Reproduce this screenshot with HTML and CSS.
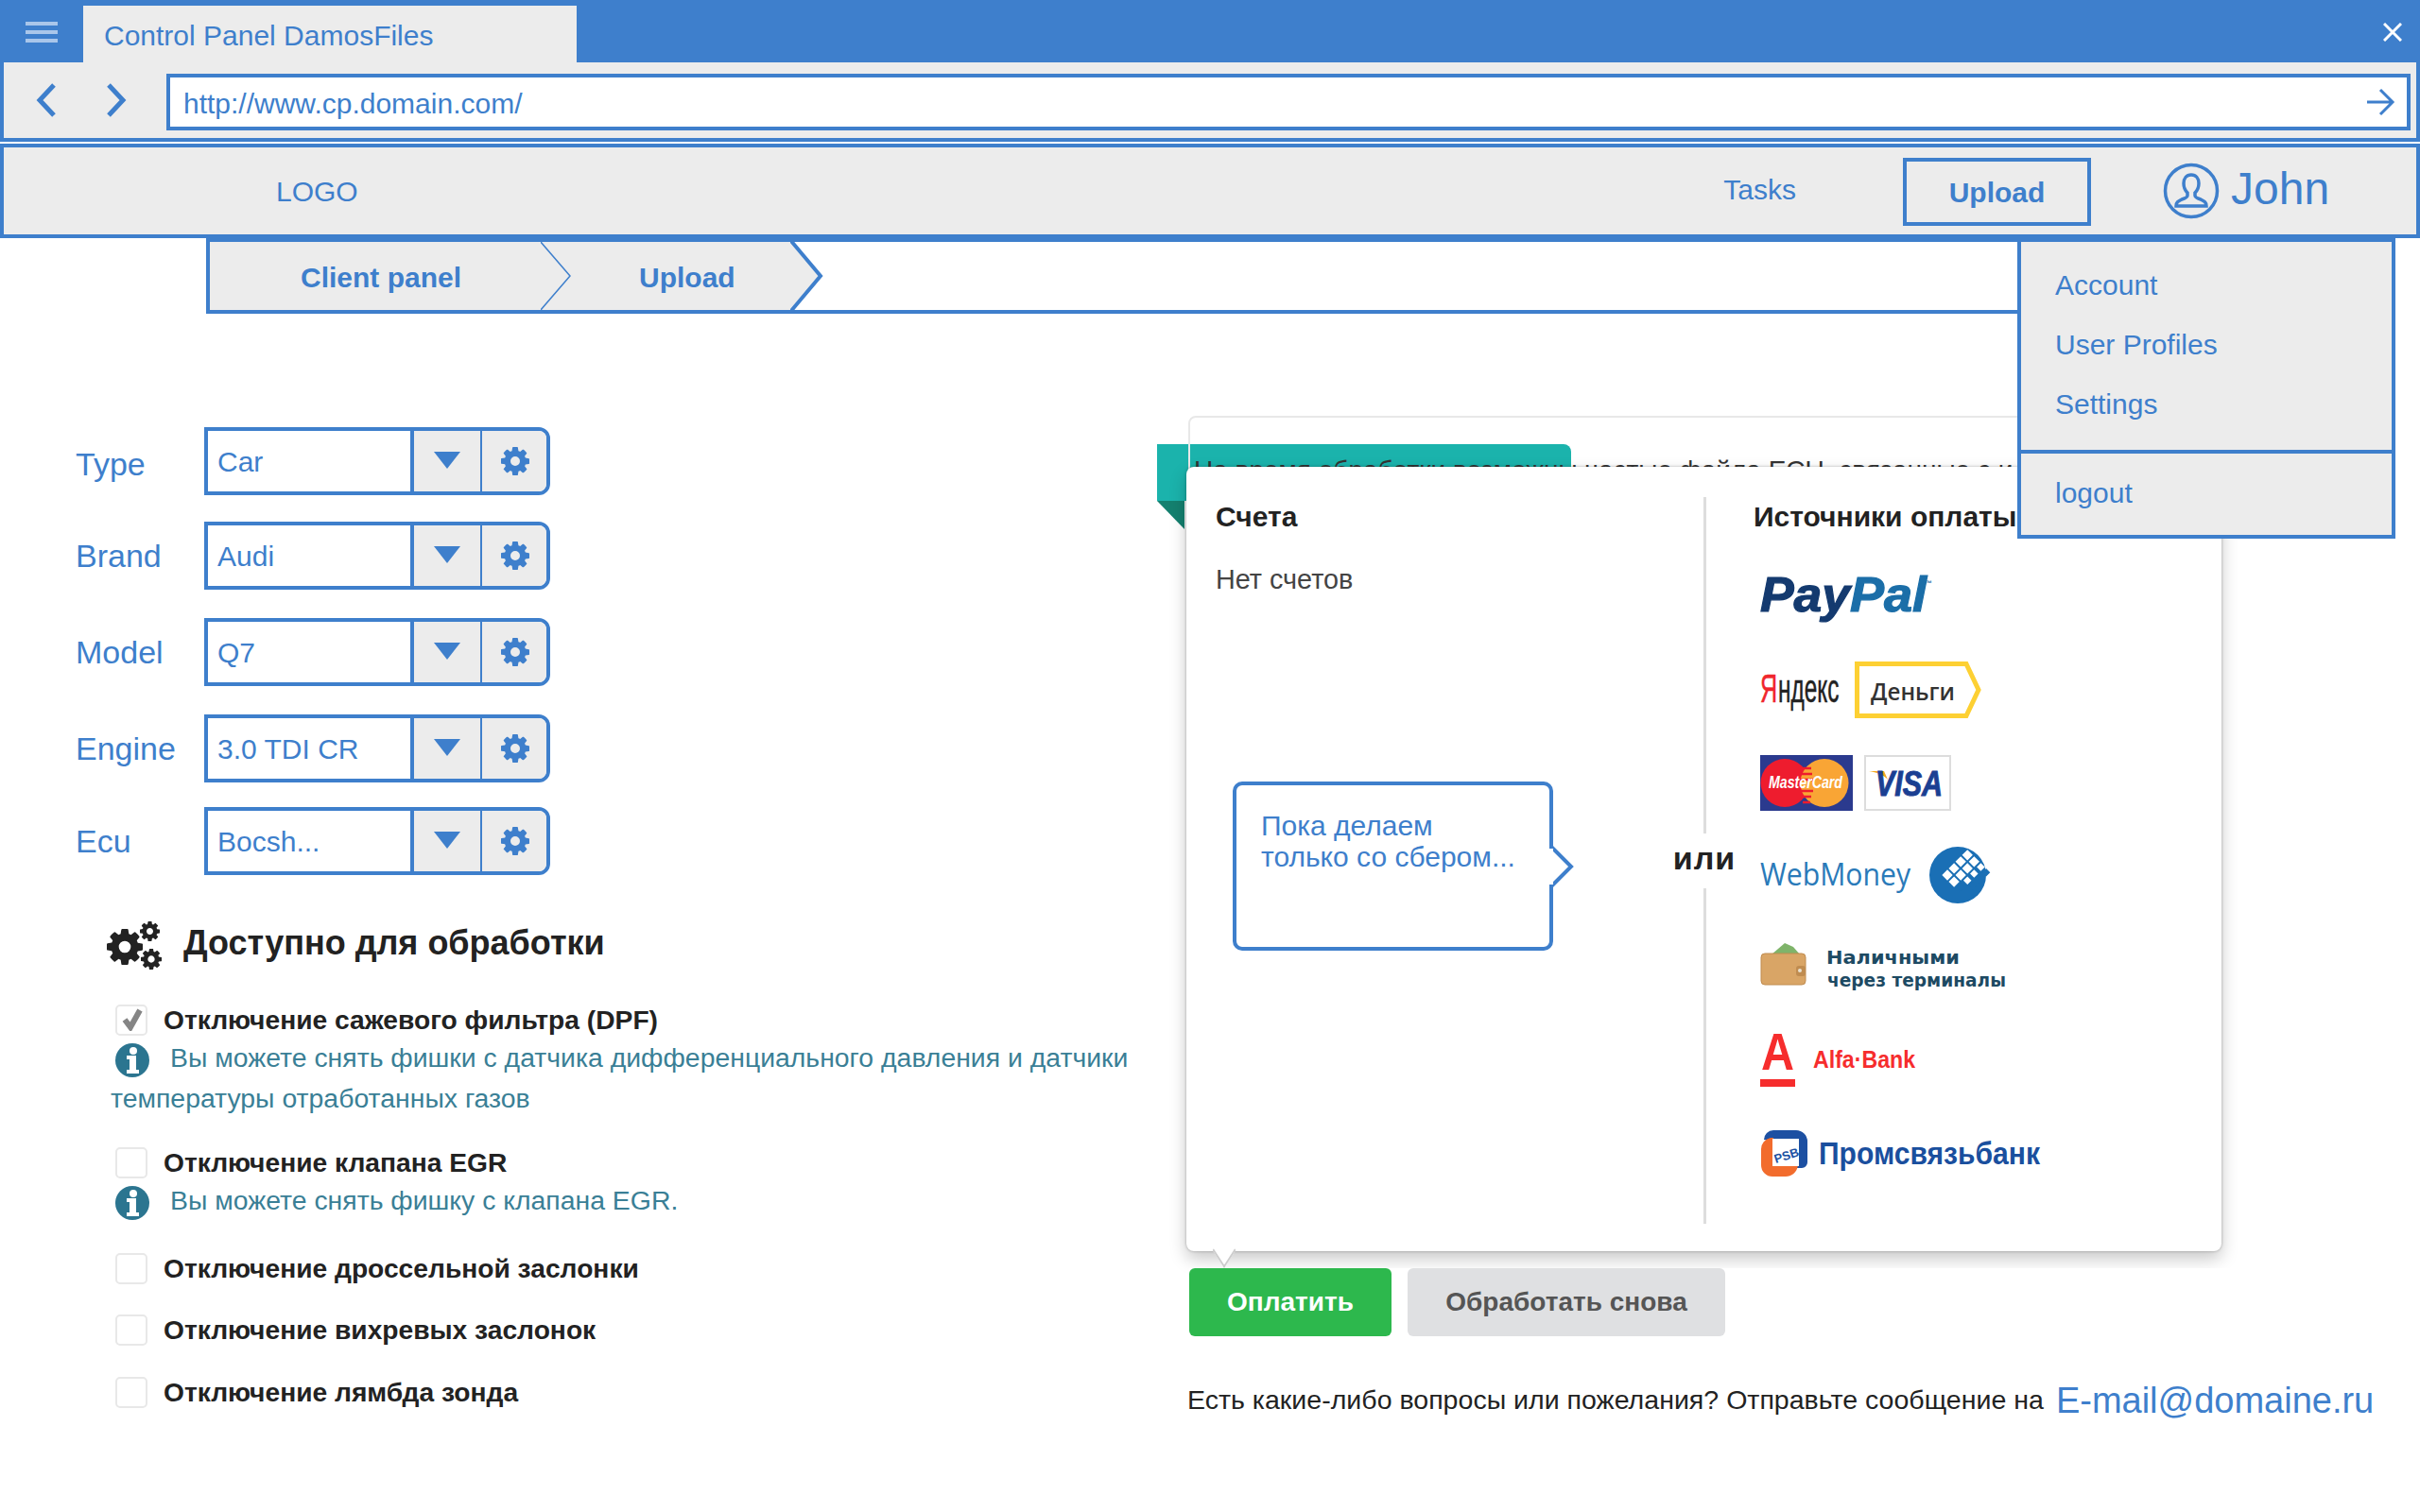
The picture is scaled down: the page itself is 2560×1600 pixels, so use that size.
FILE: index.html
```html
<!DOCTYPE html>
<html lang="ru">
<head>
    <meta charset="UTF-8">
    <title>Control Panel DamosFiles</title>
    <link rel="stylesheet" href="styles.css">
</head>
<body>
    <svg class="defs" width="0" height="0">
        <symbol id="cog" viewBox="0 0 1536 1536">
            <path fill-rule="evenodd" d="M1024 768q0-106-75-181t-181-75-181 75-75 181 75 181 181 75 181-75 75-181zm512-109v222q0 12-8 23t-20 13l-185 28q-19 54-39 91 35 50 107 138 10 12 10 25t-9 23q-27 37-99 108t-94 71q-12 0-26-9l-138-108q-44 23-91 38-16 136-29 186-7 28-36 28h-222q-14 0-24.500-8.500t-11.500-21.500l-28-184q-49-16-90-37l-141 107q-10 9-25 9-14 0-25-11-126-114-165-168-7-10-7-23 0-12 8-23 15-21 51-66.500t54-70.500q-27-50-41-99l-183-27q-13-2-21-12.500t-8-23.500v-222q0-12 8-23t19-13l186-28q14-46 39-92-40-57-107-138-10-12-10-24 0-10 9-23 26-36 98.500-107.500t94.500-71.500q13 0 26 10l138 107q44-23 91-38 16-136 29-186 7-28 36-28h222q14 0 24.500 8.500t11.500 21.500l28 184q49 16 90 37l142-107q9-9 24-9 13 0 25 10 129 119 165 170 7 8 7 22 0 12-8 23-15 21-51 66.500t-54 70.500q26 50 41 98l183 28q13 2 21 12.500t8 23.500z"/>
        </symbol>
        <symbol id="info" viewBox="0 0 36 36">
            <circle cx="18" cy="18" r="18"/>
            <circle cx="19" cy="8" r="4" fill="#fff"/>
            <path fill="#fff" d="M12 13h10v15h3v4H12v-4h3v-11h-3z"/>
        </symbol>
    </svg>

    <header class="titlebar">
        <div class="hamburger"><span></span><span></span><span></span></div>
        <div class="tab">Control Panel DamosFiles</div>
        <svg class="close" width="20" height="20" viewBox="0 0 20 20"><path d="M1 1l18 18M19 1L1 19"/></svg>
    </header>

    <div class="addressbar">
        <svg class="nav-arrow" width="22" height="36" viewBox="0 0 22 36"><path d="M19 2L4 18l15 16"/></svg>
        <svg class="nav-arrow" width="22" height="36" viewBox="0 0 22 36"><path d="M3 2l15 16L3 34"/></svg>
        <div class="url">
            <span>http://www.cp.domain.com/</span>
            <svg class="go" width="28" height="28" viewBox="0 0 28 28"><path d="M0 14h26M14 1l13 13-13 13"/></svg>
        </div>
    </div>

    <nav class="topnav">
        <div class="logo">LOGO</div>
        <a class="tasks">Tasks</a>
        <a class="upload-btn">Upload</a>
        <div class="user">
            <svg width="60" height="62" viewBox="0 0 60 62"><circle cx="30" cy="31" r="27.500"/><path d="M30 14c-5 0-8 4-8 9 0 4 1 7 4 10v3c0 2-3 3-6 4-4 2-6 3-6 7h32c0-4-2-5-6-7-3-1-6-2-6-4v-3c3-3 4-6 4-10 0-5-3-9-8-9z"/></svg>
            <span>John</span>
        </div>
    </nav>

    <div class="crumbs">
        <div class="crumb crumb-client">Client panel
            <svg class="chevron chevron-thin" width="36" height="72" viewBox="0 0 36 72"><path d="M0 0l31 36L0 72"/></svg>
        </div>
        <div class="crumb crumb-upload">Upload
            <svg class="chevron" width="36" height="72" viewBox="0 0 36 72"><path d="M0-2l32 38L0 74"/></svg>
        </div>
    </div>

    <div class="user-menu">
        <ul>
            <li>Account</li>
            <li>User Profiles</li>
            <li>Settings</li>
        </ul>
        <div class="logout">logout</div>
    </div>

    <main class="content">
        <section class="left">
            <div class="fields">
                <div class="field">
                    <label>Type</label>
                    <div class="select">
                        <div class="value">Car</div>
                        <div class="caret"><i></i></div>
                        <div class="cfg"><svg width="30" height="30"><use href="#cog"/></svg></div>
                    </div>
                </div>
                <div class="field">
                    <label>Brand</label>
                    <div class="select">
                        <div class="value">Audi</div>
                        <div class="caret"><i></i></div>
                        <div class="cfg"><svg width="30" height="30"><use href="#cog"/></svg></div>
                    </div>
                </div>
                <div class="field">
                    <label>Model</label>
                    <div class="select">
                        <div class="value">Q7</div>
                        <div class="caret"><i></i></div>
                        <div class="cfg"><svg width="30" height="30"><use href="#cog"/></svg></div>
                    </div>
                </div>
                <div class="field">
                    <label>Engine</label>
                    <div class="select">
                        <div class="value">3.0 TDI CR</div>
                        <div class="caret"><i></i></div>
                        <div class="cfg"><svg width="30" height="30"><use href="#cog"/></svg></div>
                    </div>
                </div>
                <div class="field">
                    <label>Ecu</label>
                    <div class="select">
                        <div class="value">Bocsh...</div>
                        <div class="caret"><i></i></div>
                        <div class="cfg"><svg width="30" height="30"><use href="#cog"/></svg></div>
                    </div>
                </div>
            </div>

            <div class="section-title">
                <svg width="60" height="52" viewBox="0 0 60 52">
                    <use href="#cog" x="0" y="8" width="38" height="38"/>
                    <use href="#cog" x="35" y="0" width="21" height="21"/>
                    <use href="#cog" x="36" y="29" width="22" height="22"/>
                </svg>
                <h2>Доступно для обработки</h2>
            </div>

            <div class="options">
                <div class="opt">
                    <div class="opt-row">
                        <span class="box"><svg width="24" height="24" viewBox="0 0 24 24"><path d="M4 12l6 8L20 2"/></svg></span>
                        <b>Отключение сажевого фильтра (DPF)</b>
                    </div>
                    <p class="hint"><svg class="info" width="36" height="36"><use href="#info"/></svg>Вы можете снять фишки с датчика дифференциального давления и датчики температуры отработанных газов</p>
                </div>
                <div class="opt">
                    <div class="opt-row">
                        <span class="box"></span>
                        <b>Отключение клапана EGR</b>
                    </div>
                    <p class="hint"><svg class="info" width="36" height="36"><use href="#info"/></svg>Вы можете снять фишку с клапана EGR.</p>
                </div>
                <div class="opt">
                    <div class="opt-row">
                        <span class="box"></span>
                        <b>Отключение дроссельной заслонки</b>
                    </div>
                </div>
                <div class="opt">
                    <div class="opt-row">
                        <span class="box"></span>
                        <b>Отключение вихревых заслонок</b>
                    </div>
                </div>
                <div class="opt">
                    <div class="opt-row">
                        <span class="box"></span>
                        <b>Отключение лямбда зонда</b>
                    </div>
                </div>
            </div>
        </section>

        <section class="right">
            <div class="back-card">На время обработки возможны частые файла ECU, связанные с и</div>
            <div class="ribbon"></div>

            <div class="pay-card">
                <div class="accounts">
                    <h3>Счета</h3>
                    <p class="no-accounts">Нет счетов</p>
                    <div class="callout">
                        Пока делаем<br>только со сбером...
                        <svg width="30" height="50" viewBox="0 0 30 50"><path d="M4 4l21 21L4 46"/><rect x="2" y="6" width="4" height="38"/></svg>
                    </div>
                </div>
                <div class="sources">
                    <div class="or">или</div>
                    <h3>Источники оплаты</h3>

                    <div class="logos">
                        <svg class="logo-paypal" width="184" height="48" viewBox="0 0 184 48">
                            <text class="pay" x="0" y="37" textLength="95" lengthAdjust="spacingAndGlyphs">Pay</text>
                            <text class="pal" x="95" y="37" textLength="81" lengthAdjust="spacingAndGlyphs">Pal</text>
                            <text class="tm" x="174" y="10">™</text>
                        </svg>

                        <svg class="logo-yandex" width="236" height="60" viewBox="0 0 236 60">
                            <text class="ya ya-red" transform="translate(0 43) scale(0.6 1)">Я</text>
                            <text class="ya" transform="translate(19 43) scale(0.58 1)">ндекс</text>
                            <path d="M102.500 2.500H218L231 30 218 57.500H102.500z"/>
                            <text class="den" x="117" y="41" textLength="89" lengthAdjust="spacingAndGlyphs">Деньги</text>
                        </svg>

                        <svg class="logo-cards" width="202" height="59" viewBox="0 0 202 59">
                            <rect width="98" height="59" fill="#2b3a8e"/>
                            <circle cx="26" cy="29.500" r="25.500" fill="#ee1c2e"/>
                            <circle cx="68" cy="29.500" r="25.500" fill="#f9a535"/>
                            <path d="M44 14h10M43 20h12M42 26h14M42 38h14M44 44h10M45 50h8" stroke="#ee1c2e" stroke-width="2.500"/>
                            <text class="mc" x="9" y="35" textLength="78" lengthAdjust="spacingAndGlyphs">MasterCard</text>
                            <rect x="111" y="1" width="90" height="57" fill="#fff" stroke="#ddd" stroke-width="2"/>
                            <path d="M115 17h16l4 9c-4-5-12-8-20-9z" fill="#f4a81c"/>
                            <text class="visa" x="122" y="43" textLength="71" lengthAdjust="spacingAndGlyphs">VISA</text>
                        </svg>

                        <svg class="logo-wm" width="240" height="60" viewBox="0 0 240 60">
                            <text x="0" y="41" textLength="159" lengthAdjust="spacingAndGlyphs">WebMoney</text>
                            <circle cx="209" cy="30" r="30" fill="#1a6fb5"/>
                            <g transform="translate(-2 0)">
                                <path fill="#fff" transform="rotate(45 217 30)" d="M201 8h8v8h-8zM211 8h8v8h-8zM221 8h6v6h-6zM201 18h8v8h-8zM211 18h8v8h-8zM221 18h6v6h-6zM201 28h8v8h-8zM211 28h8v8h-8zM221 28h6v6h-6zM201 38h8v8h-8zM211 38h8v8h-8z"/>
                                <path fill="#1a6fb5" transform="rotate(45 217 30)" d="M229 8h6v6h-6zM229 18h6v6h-6zM229 28h6v6h-6zM221 38h6v6h-6z"/>
                            </g>
                        </svg>

                        <svg class="logo-cash" width="262" height="50" viewBox="0 0 262 50">
                            <path d="M12 12L26 0l9 4 7 8z" fill="#7fb46a"/>
                            <rect x="1" y="11" width="47" height="33" rx="4" fill="#d9a566" stroke="#c08c50"/>
                            <rect x="38" y="24" width="10" height="11" rx="3" fill="#c08c50"/>
                            <circle cx="42" cy="29" r="2" fill="#e9e2d0"/>
                            <text x="70" y="22" textLength="141" lengthAdjust="spacingAndGlyphs">Наличными</text>
                            <text x="71" y="46" textLength="189" lengthAdjust="spacingAndGlyphs">через терминалы</text>
                        </svg>

                        <svg class="logo-alfa" width="166" height="58" viewBox="0 0 166 58">
                            <text class="alfa-a" x="1" y="40" textLength="35" lengthAdjust="spacingAndGlyphs">A</text>
                            <rect y="50" width="37" height="8"/>
                            <text class="alfa-t" x="56" y="38" textLength="108" lengthAdjust="spacingAndGlyphs">Alfa·Bank</text>
                        </svg>

                        <svg class="logo-psb" width="298" height="50" viewBox="0 0 298 50">
                            <path d="M4 10a10 10 0 0 1 10-10h24a12 12 0 0 1 12 12v22a6 6 0 0 1-6 6H14V11h-3z" fill="#1d50a2"/>
                            <path d="M1 20a12 12 0 0 1 10-12h3v29h26c-1 8-7 12-13 12H13a12 12 0 0 1-12-12z" fill="#f26c2d"/>
                            <rect x="13" y="9" width="28" height="29" fill="#fff"/>
                            <text class="psb-mark" x="14" y="32" transform="rotate(-18 25 26)">PSB</text>
                            <text class="psb-name" x="62" y="36" textLength="234" lengthAdjust="spacingAndGlyphs">Промсвязьбанк</text>
                        </svg>
                    </div>
                </div>
            </div>

            <div class="actions">
                <button class="btn btn-pay">Оплатить</button>
                <button class="btn btn-again">Обработать снова</button>
            </div>

            <div class="contact">
                <span>Есть какие-либо вопросы или пожелания? Отправьте сообщение на</span>
                <a>E-mail@domaine.ru</a>
            </div>
        </section>
    </main>
</body>
</html>
```

FILE: styles.css
```css
* {
    box-sizing: border-box;
}

body {
    margin: 0;
    width: 2560px;
    height: 1600px;
    overflow: hidden;
    position: relative;
    background: #fff;
    color: #3e7fcc;
    font-family: "Liberation Sans", Arial, sans-serif;
    font-size: 30px;
}

.defs {
    position: absolute;
}

/* window chrome */
.titlebar {
    height: 66px;
    background: #3e7fcc;
    display: flex;
    align-items: flex-end;
}

.hamburger {
    width: 88px;
    height: 66px;
    padding: 23px 0 0 27px;
}

.hamburger span {
    display: block;
    width: 34px;
    height: 4px;
    margin-bottom: 5px;
    background: #a9c6ea;
}

.tab {
    width: 522px;
    height: 60px;
    padding-left: 22px;
    line-height: 64px;
    background: #ececec;
}

.close {
    margin: 0 19px 22px auto;
    fill: none;
    stroke: #fff;
    stroke-width: 3;
}

.addressbar {
    height: 84px;
    display: flex;
    align-items: center;
    padding: 0 6px 0 34px;
    background: #ececec;
    border: 4px solid #3e7fcc;
    border-top: none;
}

.nav-arrow {
    margin-right: 52px;
    fill: none;
    stroke: #3e7fcc;
    stroke-width: 5;
}

.nav-arrow + .nav-arrow {
    margin-right: 42px;
}

.url {
    flex: 1;
    height: 60px;
    margin-top: 4px;
    padding: 0 14px 0 14px;
    display: flex;
    align-items: center;
    justify-content: space-between;
    background: #fff;
    border: 4px solid #3e7fcc;
}

.url span {
    padding-top: 3px;
}

.go {
    fill: none;
    stroke: #3e7fcc;
    stroke-width: 3;
    overflow: visible;
}

/* top navigation */
.topnav {
    height: 100px;
    margin-top: 2px;
    display: flex;
    align-items: center;
    background: #ececec;
    border: 4px solid #3e7fcc;
}

.logo {
    flex: 1;
    margin-left: 288px;
    padding-top: 2px;
}

.tasks {
    margin: -2px 113px 0 0;
}

.upload-btn {
    width: 199px;
    height: 72px;
    line-height: 66px;
    margin-top: 1px;
    text-align: center;
    font-weight: bold;
    border: 4px solid #3e7fcc;
}

.user {
    width: 268px;
    margin-left: 76px;
    display: flex;
    align-items: center;
    font-size: 48px;
}

.user svg {
    flex: none;
    margin-right: 12px;
    fill: none;
    stroke: #3e7fcc;
    stroke-width: 3.500;
}

.user span {
    margin-top: -6px;
}

.crumbs {
    height: 80px;
    margin-left: 218px;
    width: 1930px;
    display: flex;
    border: 4px solid #3e7fcc;
    border-right: none;
    font-weight: bold;
}

.crumb {
    position: relative;
    display: flex;
    align-items: center;
    padding-top: 3px;
    background: #ececec;
}

.crumb-client {
    width: 350px;
    padding-left: 96px;
    z-index: 1;
}

.crumb-upload {
    width: 264px;
    padding-left: 104px;
}

.chevron {
    position: absolute;
    left: 100%;
    top: 0;
    fill: #ececec;
    stroke: #3e7fcc;
    stroke-width: 4;
}

.chevron-thin {
    stroke-width: 1.500;
}

.user-menu {
    position: absolute;
    left: 2134px;
    top: 252px;
    width: 400px;
    height: 318px;
    z-index: 5;
    background: #ececec;
    border: 4px solid #3e7fcc;
}

.user-menu ul {
    list-style: none;
    margin: 0;
    height: 224px;
    padding: 14px 0 0 36px;
    border-bottom: 4px solid #3e7fcc;
}

.user-menu li {
    height: 63px;
    line-height: 63px;
}

.logout {
    padding-left: 36px;
    line-height: 84px;
}

/* page */
.content {
    display: flex;
}

.left {
    width: 1253px;
    padding: 120px 0 0 80px;
}

.field {
    height: 72px;
    display: flex;
    align-items: center;
    margin-bottom: 30px;
}

.field:first-child {
    margin-bottom: 28px;
}

.field:first-child label {
    padding-top: 7px;
}

.field:nth-child(4) {
    margin-bottom: 26px;
}

.field label {
    width: 136px;
    font-size: 34px;
}

.select {
    width: 366px;
    height: 72px;
    display: flex;
    border: 4px solid #3e7fcc;
    border-radius: 0 12px 12px 0;
    overflow: hidden;
}

.value {
    width: 214px;
    padding: 2px 0 0 10px;
    display: flex;
    align-items: center;
}

.caret,
.cfg {
    display: flex;
    align-items: center;
    justify-content: center;
    background: #ececec;
}

.caret {
    width: 76px;
    padding-bottom: 2px;
    border-left: 4px solid #3e7fcc;
    border-right: 2px solid #3e7fcc;
}

.caret i {
    width: 0;
    height: 0;
    border-left: 14px solid transparent;
    border-right: 14px solid transparent;
    border-top: 18px solid #3e7fcc;
}

.cfg {
    flex: 1;
    padding: 0 0 0 2px;
    fill: #3e7fcc;
}

.section-title {
    height: 52px;
    margin: 49px 0 36px 33px;
    display: flex;
    align-items: center;
    fill: #222;
}

.section-title h2 {
    margin: -6px 0 0 21px;
    color: #222;
    font-size: 36px;
}

.options {
    margin-left: 42px;
    width: 1130px;
    color: #222;
    font-size: 28.200px;
}

.opt {
    margin-top: 32px;
}

.opt:first-child {
    margin-top: 0;
}

.opt:nth-child(2) {
    margin-top: 30px;
}

.opt:nth-child(3) {
    margin-top: 34px;
}

.opt:last-child {
    margin-top: 33px;
}

.opt-row {
    height: 33px;
    display: flex;
    align-items: center;
}

.box {
    width: 34px;
    height: 33px;
    margin-right: 17px;
    padding: 2px 0 0 4px;
    background: #fff;
    border: 2px solid #e8e8e8;
    border-radius: 5px;
}

.box svg {
    display: block;
    fill: none;
    stroke: #858585;
    stroke-width: 6;
}

.hint {
    margin: 2px 0 0 -5px;
    line-height: 43px;
    font-size: 28.400px;
    color: #3a7f96;
}

.info {
    margin: 0 22px 0 5px;
    vertical-align: middle;
    fill: #2b7590;
}

/* payment */
.right {
    position: relative;
    width: 1307px;
    padding-top: 162px;
}

.back-card {
    position: absolute;
    z-index: 1;
    left: 4px;
    top: 108px;
    width: 1089px;
    height: 200px;
    padding: 40px 0 0 4px;
    white-space: nowrap;
    overflow: hidden;
    color: #333;
    font-size: 28px;
    border: 2px solid #e8e8e8;
    border-radius: 8px;
}

.ribbon {
    position: absolute;
    left: -29px;
    top: 138px;
    width: 438px;
    height: 60px;
    background: #1bb3ac;
    border-radius: 0 8px 0 0;
}

.ribbon::after {
    content: "";
    position: absolute;
    left: 0;
    top: 100%;
    border-top: 30px solid #14806f;
    border-left: 29px solid transparent;
}

.pay-card {
    position: relative;
    z-index: 2;
    width: 1095px;
    height: 830px;
    margin-left: 2px;
    display: flex;
    background: #fff;
    border-radius: 8px;
    box-shadow: 0 0 3px rgba(0, 0, 0, 0.3), 0 8px 18px rgba(0, 0, 0, 0.22);
}

.pay-card::after {
    content: "";
    position: absolute;
    left: 29px;
    bottom: -10px;
    width: 20px;
    height: 20px;
    background: #fff;
    border-right: 2px solid #ccc;
    border-bottom: 2px solid #ccc;
    transform: rotate(45deg) skew(12deg, 12deg);
}

.pay-card h3 {
    margin: 0;
    color: #222;
    font-size: 30px;
    line-height: 32px;
}

.accounts {
    width: 547px;
    padding: 37px 0 0 31px;
}

.no-accounts {
    margin: 34px 0 0;
    color: #444;
    font-size: 28.800px;
    line-height: 32px;
}

.callout {
    position: relative;
    width: 339px;
    height: 179px;
    margin: 198px 0 0 18px;
    padding: 26px 0 0 26px;
    line-height: 33px;
    border: 4px solid #3e7fcc;
    border-radius: 10px;
    font-size: 30px;
    background: #fff;
}

.callout svg {
    position: absolute;
    left: 329px;
    top: 61px;
    fill: #fff;
    stroke: #3e7fcc;
    stroke-width: 4;
}

.callout svg rect {
    stroke: none;
}

.sources {
    position: relative;
    flex: 1;
    margin: 32px 0 29px;
    padding: 5px 0 0 50px;
    border-left: 3px solid #ddd;
}

.or {
    position: absolute;
    left: -42px;
    top: 356px;
    width: 80px;
    height: 58px;
    line-height: 52px;
    text-align: center;
    color: #222;
    font-size: 34px;
    font-weight: bold;
    letter-spacing: 1px;
    background: #fff;
}

.logos {
    margin: 47px 0 0 7px;
}

.logos svg {
    display: block;
    margin-top: 42px;
    overflow: visible;
}

.logos svg:first-child {
    margin-top: 0;
}

.logo-paypal text {
    font-size: 52px;
    font-weight: bold;
    font-style: italic;
    stroke-width: 1.200;
}

.pay {
    fill: #143a6f;
    stroke: #143a6f;
}

.pal {
    fill: #1b6ea8;
    stroke: #1b6ea8;
}

.logo-paypal .tm {
    font-size: 8px;
    font-style: normal;
    stroke-width: 0;
    fill: #1b6ea8;
}

.logo-yandex .ya {
    font-size: 42px;
    fill: #222;
    stroke: #222;
    stroke-width: 0.500;
}

.logo-yandex .ya-red {
    fill: #f0262c;
    stroke: #f0262c;
}

.logo-yandex path {
    fill: none;
    stroke: #fdd033;
    stroke-width: 5;
}

.logo-yandex .den {
    font-family: "Open Sans", sans-serif;
    font-size: 25px;
    font-weight: 600;
    fill: #333;
}

.logos .logo-cards {
    margin-top: 39px;
}

.mc {
    font-size: 18px;
    font-weight: bold;
    font-style: italic;
    fill: #fff;
}

.visa {
    font-size: 36px;
    font-weight: bold;
    font-style: italic;
    fill: #1b3f92;
    stroke: #1b3f92;
    stroke-width: 1;
}

.logos .logo-wm {
    margin-top: 38px;
}

.logo-wm text {
    font-family: "Open Sans", sans-serif;
    font-size: 33px;
    fill: #2a7ab9;
}

.logos .logo-cash {
    margin-top: 42px;
}

.logo-cash text {
    font-family: "DejaVu Sans", sans-serif;
    font-size: 19px;
    font-weight: bold;
    fill: #1d4a63;
}

.logos .logo-alfa {
    margin-top: 44px;
    fill: #f62d2d;
}

.alfa-a {
    font-size: 56px;
    font-weight: bold;
}

.alfa-t {
    font-size: 25px;
    font-weight: bold;
}

.logos .logo-psb {
    margin-top: 46px;
}

.psb-mark {
    font-size: 13px;
    font-weight: bold;
    fill: #1d50a2;
}

.psb-name {
    font-size: 34px;
    font-weight: bold;
    fill: #1a4f9e;
}

.actions {
    position: relative;
    z-index: 3;
    margin: 18px 0 0 5px;
    display: flex;
    gap: 17px;
    background: #fff;
}

.btn {
    height: 72px;
    font-family: inherit;
    font-size: 28px;
    font-weight: bold;
    border: none;
    border-radius: 6px;
}

.btn-pay {
    width: 214px;
    color: #fff;
    background: #2db84d;
}

.btn-again {
    width: 336px;
    color: #555;
    background: #dfe0e2;
}

.contact {
    margin: 44px 0 0 3px;
    display: flex;
    align-items: center;
    gap: 13px;
    color: #222;
    font-size: 28.550px;
    white-space: nowrap;
}

.contact a {
    padding-top: 3px;
    color: #3e7fcc;
    font-size: 38px;
}
```
